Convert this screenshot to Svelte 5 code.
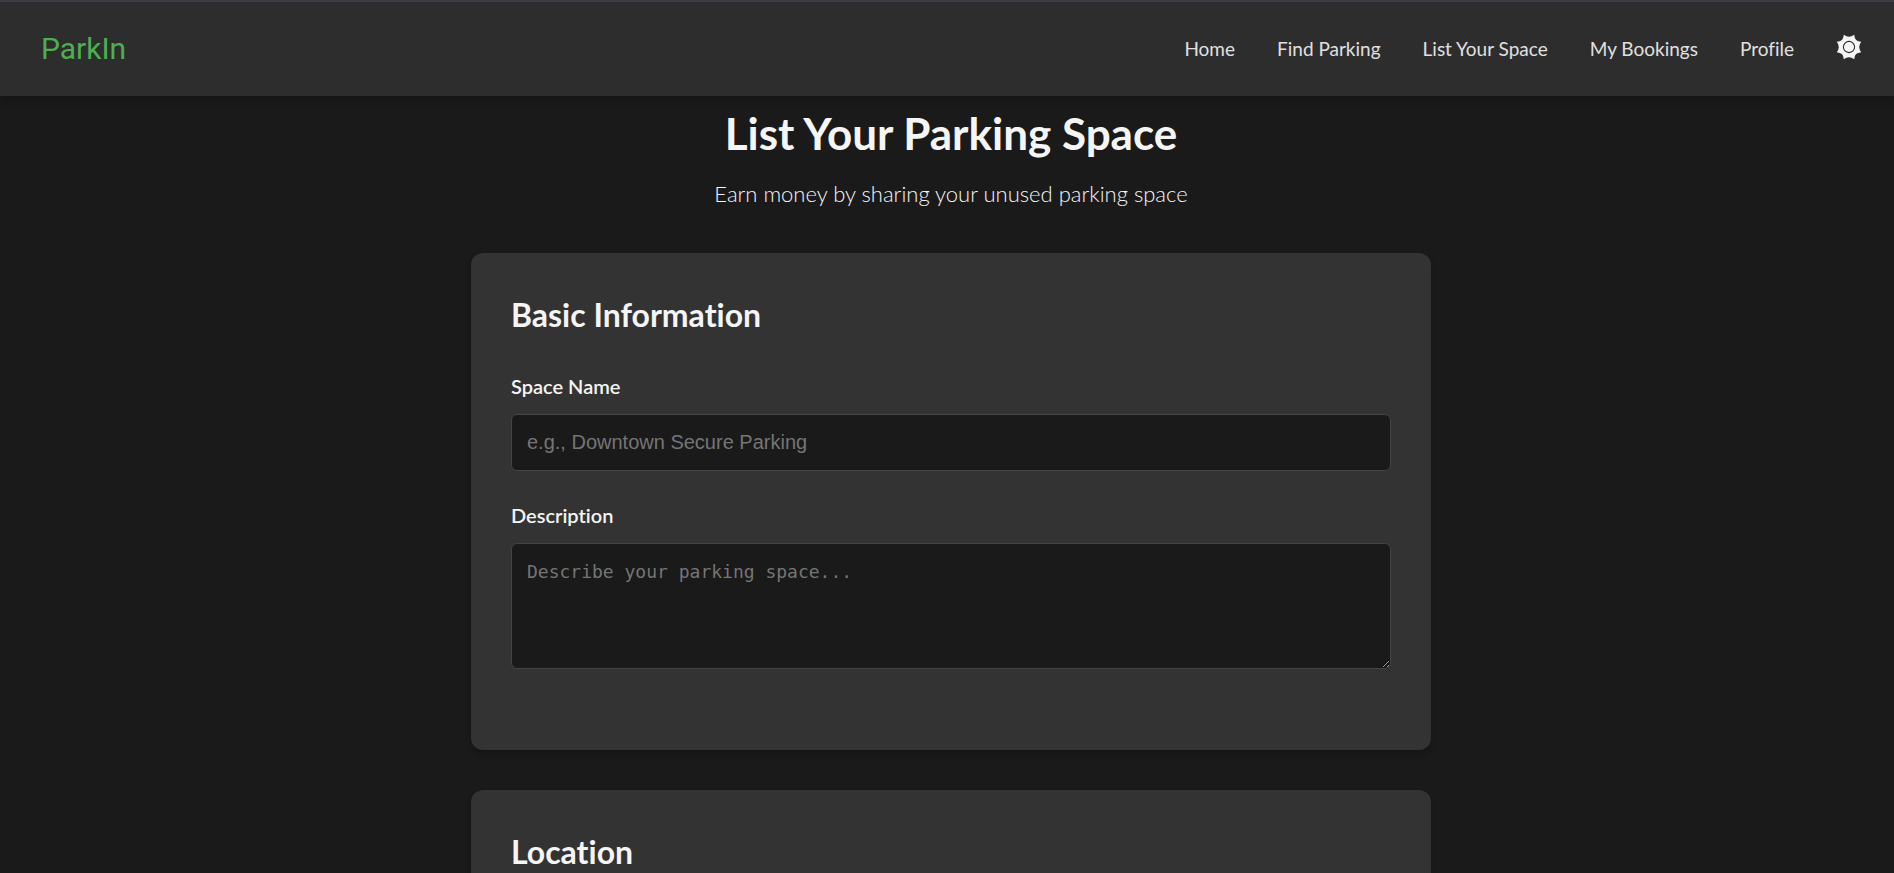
<script>
  const links = ['Home', 'Find Parking', 'List Your Space', 'My Bookings', 'Profile'];
  let name = $state('');
  let description = $state('');
  let light = $state(false);
</script>

<header>
  <a class="logo" href="#home">ParkIn</a>
  <nav aria-label="Main">
    {#each links as link}
      <a href="#{link.toLowerCase().replaceAll(' ', '-')}">{link}</a>
    {/each}
    <button type="button" aria-label="Toggle theme" aria-pressed={light} onclick={() => (light = !light)}>
      <svg viewBox="-13 -13 26 26" width="26" height="26" aria-hidden="true">
        <path
          fill="#f5f5f5"
          d="M-5.2-12.2Q-2.5-10.2 0-10.2 2.5-10.2 5.2-12.2 5.5-8.8 7.1-7.1 8.8-5.5 12.2-5.2 10.2-2.5 10.2 0 10.2 2.5 12.2 5.2 8.8 5.5 7.1 7.1 5.5 8.8 5.2 12.2 2.5 10.2 0 10.2-2.5 10.2-5.2 12.2-5.5 8.8-7.1 7.1-8.8 5.5-12.2 5.2-10.2 2.5-10.2 0-10.2-2.5-12.2-5.2-8.8-5.5-7.1-7.1-5.5-8.8-5.2-12.2Z"
        />
        <circle r="5.6" fill="none" stroke="#2d2d2d" stroke-width="1.1" />
      </svg>
    </button>
  </nav>
</header>

<main>
  <div class="intro">
    <h1>List Your Parking Space</h1>
    <p>Earn money by sharing your unused parking space</p>
  </div>

  <form>
    <section>
      <h2>Basic Information</h2>
      <div class="field">
        <label for="space-name">Space Name</label>
        <input id="space-name" type="text" placeholder="e.g., Downtown Secure Parking" bind:value={name} />
      </div>
      <div class="field">
        <label for="description">Description</label>
        <textarea id="description" placeholder="Describe your parking space..." bind:value={description}></textarea>
      </div>
    </section>

    <section>
      <h2>Location</h2>
    </section>
  </form>
</main>

<style>
  :global(html) {
    scrollbar-width: none;
    background: #1a1a1a;
  }
  :global(body) {
    font-family: Lato, sans-serif;
    font-size: 20px;
    line-height: 32px;
    font-variant-ligatures: none;
    color: #f5f5f5;
  }
  header {
    position: sticky;
    top: 0;
    display: flex;
    align-items: center;
    justify-content: space-between;
    box-sizing: border-box;
    min-height: 96px;
    padding: 0 32px 0 41px;
    background: #2d2d2d;
    border-top: 2px solid #3c3c44;
    box-shadow: 0 2px 10px rgba(0, 0, 0, 0.3);
  }
  a {
    color: #e0e0e0;
    text-decoration: none;
  }
  .logo {
    font-family: Roboto, sans-serif;
    font-size: 30px;
    color: #4caf50;
  }
  nav {
    display: flex;
    align-items: center;
    gap: 42px;
    font-size: 19px;
  }
  button {
    display: flex;
    padding: 0 0 4px;
    border: 0;
    background: none;
    cursor: pointer;
  }
  main {
    padding: 16px 0 40px 8px;
  }
  .intro {
    text-align: center;
    margin-bottom: 41px;
  }
  h1 {
    margin: 0 0 21px;
    font-size: 44px;
    line-height: 43px;
  }
  p {
    margin: 0;
    font-size: 22px;
    line-height: 36px;
    font-weight: 300;
  }
  form {
    display: flex;
    flex-direction: column;
    gap: 40px;
    max-width: 960px;
    margin: 0 auto;
  }
  section {
    padding: 40px;
    border-radius: 12px;
    background: #333;
    box-shadow: 0 4px 6px rgba(0, 0, 0, 0.2);
  }
  h2 {
    margin: 0 0 34px;
    font-size: 32px;
    line-height: 43px;
  }
  .field {
    display: flex;
    flex-direction: column;
    gap: 12px;
    margin-bottom: 28px;
  }
  .field:last-child {
    margin-bottom: 41px;
  }
  label {
    font-weight: 600;
  }
  input,
  textarea {
    box-sizing: border-box;
    width: 100%;
    margin: 0;
    padding: 16px 15px;
    border: 1px solid #444;
    border-radius: 6px;
    background: #1a1a1a;
    color: #f5f5f5;
    font-size: 20px;
    line-height: 24px;
  }
  input {
    height: 57px;
    font-family: 'Liberation Sans', sans-serif;
  }
  textarea {
    height: 126px;
    font-family: 'DejaVu Sans Mono', monospace;
    font-size: 18px;
    resize: vertical;
  }
  ::placeholder {
    color: #757575;
  }
</style>
